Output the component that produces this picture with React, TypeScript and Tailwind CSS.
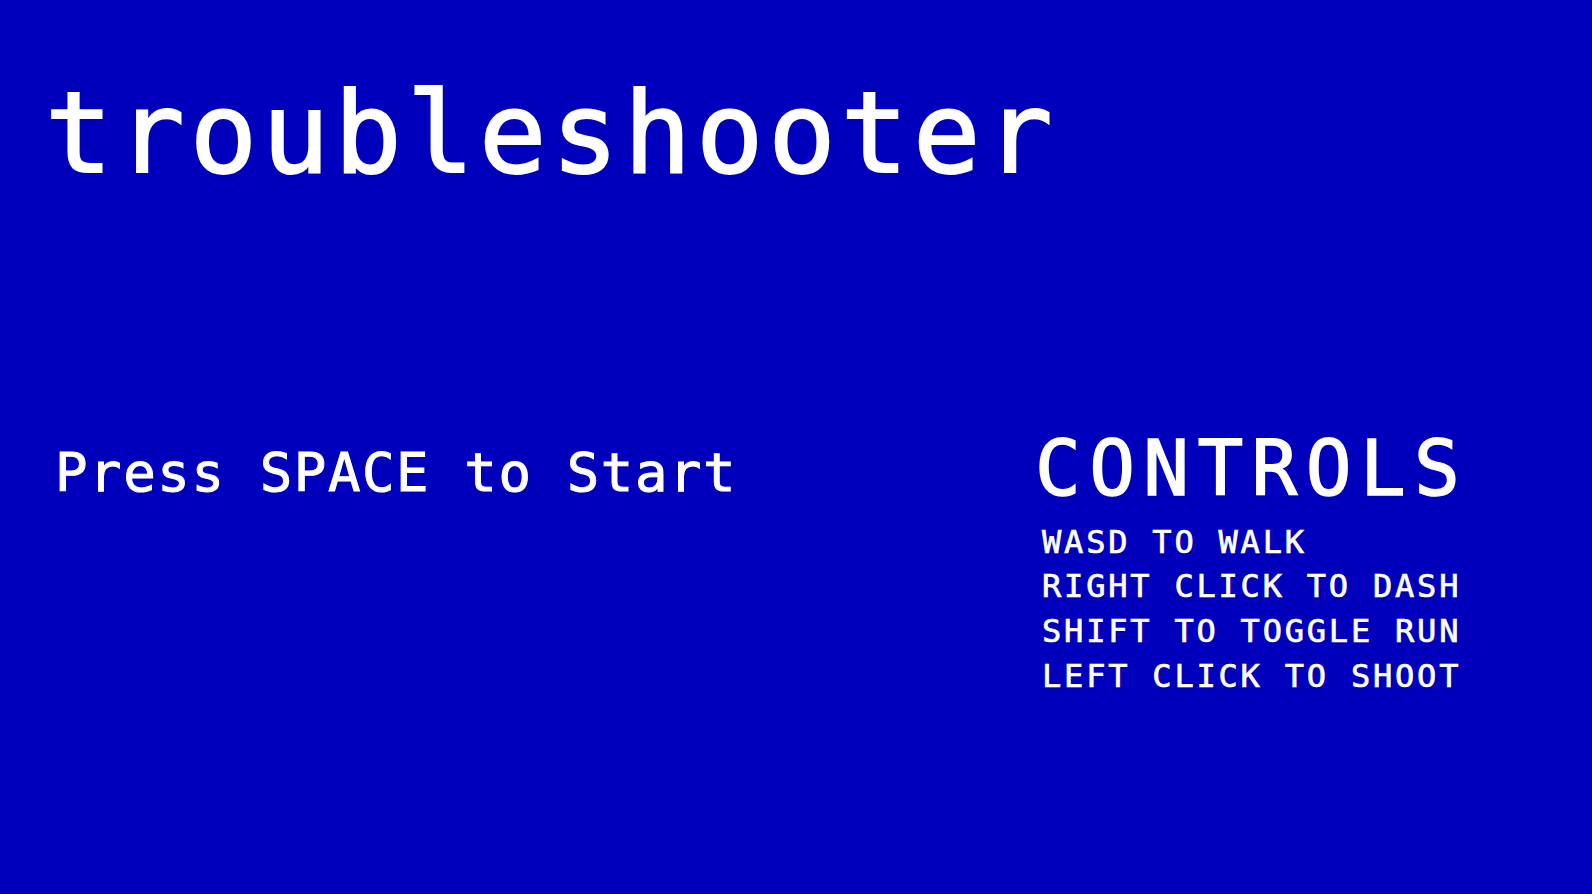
import React from "react";

const mono = { fontFamily: '"DejaVu Sans Mono", "Liberation Mono", monospace' };

export default function App() {
  const controls = [
    "WASD TO WALK",
    "RIGHT CLICK TO DASH",
    "SHIFT TO TOGGLE RUN",
    "LEFT CLICK TO SHOOT",
  ];
  return (
    <div
      className="w-[1592px] h-[894px] bg-[#0000bc] text-white overflow-hidden flex flex-col"
      style={mono}
    >
      <h1 className="pt-[77px] pl-[45px] text-[112px] leading-none tracking-[4.9px] font-normal whitespace-nowrap [-webkit-text-stroke:2px_white]">
        troubleshooter
      </h1>
      <div className="flex items-start mt-[236px]">
        <div className="w-[1035px] shrink-0 pl-[55px] pt-[21px]">
          <p className="text-[54px] leading-none tracking-[1.6px] whitespace-nowrap [-webkit-text-stroke:1px_white]">
            Press SPACE to Start
          </p>
        </div>
        <div className="flex flex-col">
          <h2 className="text-[76px] leading-none tracking-[8.4px] pt-[5.5px] whitespace-nowrap [-webkit-text-stroke:1.5px_white]">
            CONTROLS
          </h2>
          <ul className="mt-[13px] pl-[7px] flex flex-col">
            {controls.map((c) => (
              <li
                key={c}
                className="text-[32px] leading-[44.7px] tracking-[2.8px] whitespace-nowrap [-webkit-text-stroke:0.7px_white]"
              >
                {c}
              </li>
            ))}
          </ul>
        </div>
      </div>
    </div>
  );
}
